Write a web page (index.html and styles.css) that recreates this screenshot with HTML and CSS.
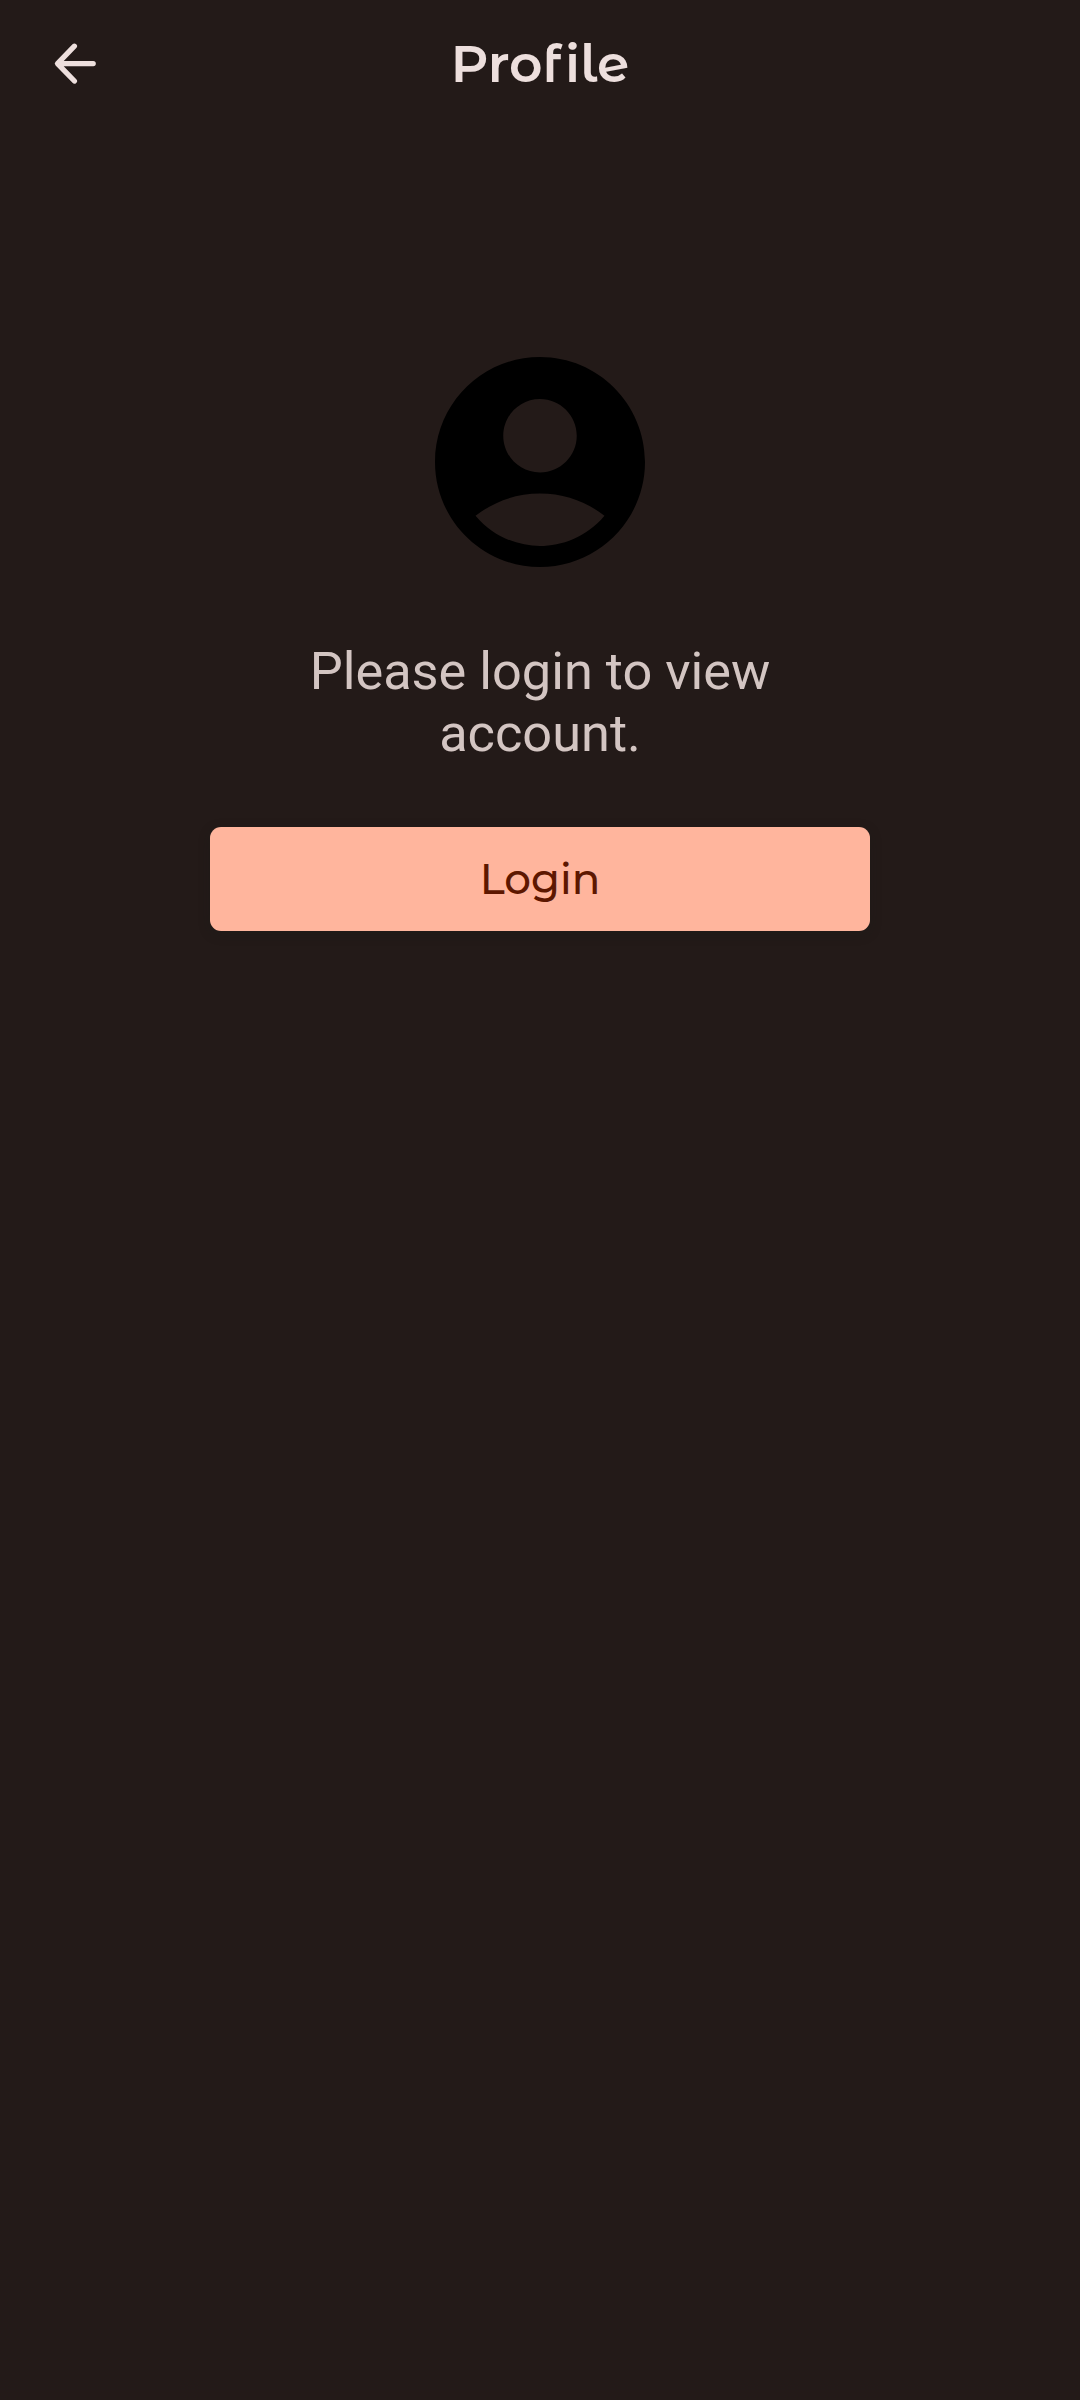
FILE: index.html
```html
<!DOCTYPE html>
<html lang="en">
<head>
<meta charset="utf-8">
<title>Profile</title>
<link rel="stylesheet" href="styles.css">
</head>
<body>
<header class="app-bar">
  <button class="back" aria-label="Back">
    <svg viewBox="0 0 44 44"><path d="M41.200 21.600H6M22.400 4.200L5.500 21.600L22.400 39"/></svg>
  </button>
  <h1 class="title">Profile</h1>
</header>
<main class="account">
  <svg class="avatar" viewBox="2 2 20 20"><path d="M12 2C6.480 2 2 6.480 2 12s4.480 10 10 10 10-4.480 10-10S17.520 2 12 2zm0 4c1.930 0 3.500 1.570 3.500 3.500S13.930 13 12 13s-3.500-1.570-3.500-3.500S10.070 6 12 6zm0 14c-2.030 0-4.430-.820-6.140-2.880C7.550 15.800 9.680 15 12 15s4.450.800 6.140 2.120C16.430 19.180 14.030 20 12 20z"/></svg>
  <p class="message">Please login to view account.</p>
  <button class="login">Login</button>
</main>
</body>
</html>
```

FILE: styles.css
```css
* { box-sizing: border-box; }
body {
  margin: 0;
  min-height: 2400px;
  background: #231a18;
  font-family: Roboto, sans-serif;
}
button { border: 0; padding: 0; background: none; }
.app-bar {
  display: grid;
  grid-template-columns: 150px 1fr 150px;
  align-items: center;
  height: 128px;
}
.back { width: 44px; height: 44px; margin-left: 52px; }
.back svg { display: block; width: 44px; height: 44px; }
.back path { fill: none; stroke: #eddfdd; stroke-width: 5.3; stroke-linecap: round; stroke-linejoin: round; }
.title {
  margin: 0;
  padding-bottom: 2px;
  text-align: center;
  font: 600 52px "Montserrat Alternates", Montserrat, Inter, sans-serif;
  color: #eddfdd;
}
.account {
  display: flex;
  flex-direction: column;
  align-items: center;
  padding: 229px 210px 0;
}
.avatar { width: 210px; height: 210px; }
.message {
  width: 500px;
  margin: 73px 0 0;
  text-align: center;
  font-size: 52.3px;
  line-height: 62px;
  color: #d3c5c2;
}
.login {
  width: 660px;
  height: 104px;
  margin-top: 63px;
  border-radius: 11px;
  background: #ffb59d;
  box-shadow: 0 3px 12px rgba(22, 26, 22, 0.25);
  color: #5d1700;
  font: 500 42px "Montserrat Alternates", Montserrat, Inter, sans-serif;
}
```
